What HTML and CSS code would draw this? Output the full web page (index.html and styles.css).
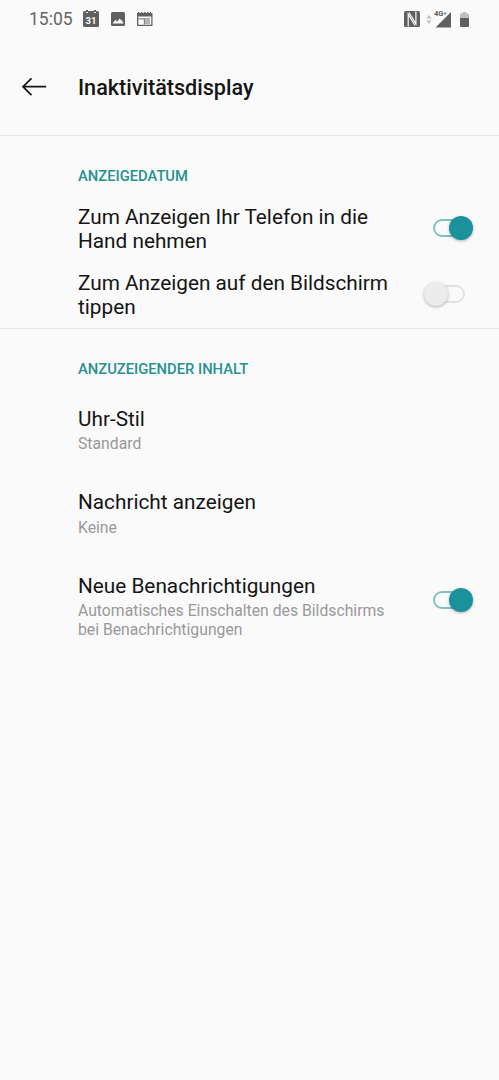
FILE: index.html
```html
<!DOCTYPE html>
<html lang="de">
<head>
<meta charset="utf-8">
<title>Inaktivitätsdisplay</title>
<link rel="stylesheet" href="styles.css">
</head>
<body>
<div class="status">
  <span class="time">15:05</span>
  <svg class="calendar" width="16" height="18" viewBox="0 0 16 18"><path fill="#606060" d="M0 2.500Q0 1 1.500 1H3V0h2v1h6V0h2v1h1.500Q16 1 16 2.500V15.500Q16 17 14.500 17h-13Q0 17 0 15.500z"/><path fill="#fafafa" d="M3 2h2v1H3zM11 2h2v1h-2z"/><text x="8" y="13.500" text-anchor="middle" class="date">31</text></svg>
  <svg class="picture" width="14" height="14" viewBox="0 0 14 14"><rect width="14" height="14" rx="1.500" fill="#606060"/><path fill="#fafafa" d="M1.500 11.500 4.500 7.700 6.300 9.800 8.700 6.500 9.700 8 10.300 7.500 12.700 11.500z"/></svg>
  <svg class="news" width="16" height="14" viewBox="0 0 16 14"><path fill="#606060" fill-rule="evenodd" d="M0 1h1V0h1.500v1H4V0h1.500v1H7V0h1.500v1H10V0h1.500v1H13V0h1v1h1.500v13H0zM1.300 4.500v8.200h13V4.500z"/><path fill="#858585" d="M1.300 6.200H13v1.200H8v5H6.800v-5H1.300z"/><path fill="#b5b5b5" d="M8 7.400h5v4.800H8z"/></svg>
  <span class="spacer"></span>
  <svg class="nfc" width="16" height="16" viewBox="0 0 16 16"><rect width="16" height="16" rx="1.500" fill="#606060"/><path fill="none" stroke="#fafafa" stroke-width="1.200" d="M4.200 15.500V3.200L11 14.500M11.900 .5V12.800L5 1.500"/></svg>
  <svg class="traffic" width="6" height="9" viewBox="0 0 6 9"><path fill="#bdbdbd" d="M3 0 5.500 3.400h-5zM3 9 .5 5.600h5z"/></svg>
  <svg class="signal" width="19" height="18" viewBox="0 0 19 18"><path fill="#606060" d="M18 2v15.500H2.500z"/><path fill="#fafafa" d="M0 0h13.500v6H0z"/><text x="1" y="6" class="network">4G<tspan dy="-1.500" font-size="5.500">+</tspan></text></svg>
  <svg class="battery" width="9" height="15" viewBox="0 0 9 15"><path fill="#bdbdbd" d="M0 2.500Q0 1.500 1 1.500h1.700V0h3.600v1.500H8q1 0 1 1V7H0z"/><path fill="#606060" d="M0 6h9v8q0 1-1 1H1q-1 0-1-1z"/></svg>
</div>
<header class="appbar">
  <svg class="back" width="26" height="20" viewBox="0 0 26 20"><path fill="none" stroke="#151515" stroke-width="1.700" d="M25.200 9.700H2M10.500 1.300 2 9.700l8.500 8.400"/></svg>
  <h1>Inaktivitätsdisplay</h1>
</header>
<main>
  <section class="group triggers">
    <h2>ANZEIGEDATUM</h2>
    <div class="row">
      <div class="label">Zum Anzeigen Ihr Telefon in die<br>Hand nehmen</div>
      <span class="switch on"><i></i><b></b></span>
    </div>
    <div class="row">
      <div class="label">Zum Anzeigen auf den Bildschirm<br>tippen</div>
      <span class="switch off"><i></i><b></b></span>
    </div>
  </section>
  <section class="group content">
    <h2>ANZUZEIGENDER INHALT</h2>
    <div class="row"><div><div class="label">Uhr-Stil</div><div class="summary">Standard</div></div></div>
    <div class="row"><div><div class="label">Nachricht anzeigen</div><div class="summary">Keine</div></div></div>
    <div class="row">
      <div><div class="label">Neue Benachrichtigungen</div><div class="summary">Automatisches Einschalten des Bildschirms<br>bei Benachrichtigungen</div></div>
      <span class="switch on"><i></i><b></b></span>
    </div>
  </section>
</main>
</body>
</html>
```
FILE: styles.css
```css
* { box-sizing: border-box; }
body { margin: 0; min-height: 1080px; background: #fafafa; color: #151515; font-family: Roboto, sans-serif; }
svg { display: block; flex: none; }
.status { display: flex; align-items: center; height: 38px; padding: 0 30px 0 29px; }
.time { width: 54px; font-size: 17.5px; color: #656565; line-height: 38px; }
.picture { margin-left: 12px; }
.news { margin-left: 12px; }
.spacer { flex: 1; }
.date { font: 700 9.5px Roboto, sans-serif; fill: #fafafa; }
.network { font: 700 7.5px Roboto, sans-serif; fill: #606060; }
.traffic { margin-left: 6px; }
.signal { margin-left: 1px; }
.battery { margin-left: 8px; }
.appbar { display: flex; align-items: center; height: 98px; padding: 0 21px; border-bottom: 1px solid #e6e6e6; }
.appbar .back { margin-right: 31px; }
h1 { margin: 2px 0 0; font-size: 21.6px; font-weight: 500; line-height: 24px; }
h2 { margin: 0; font-size: 14.75px; font-weight: 500; line-height: 18px; color: #26918f; }
.group { padding: 31px 25px 0 78px; }
.content { padding-top: 30.5px; }
.triggers { height: 193px; border-bottom: 1px solid #e6e6e6; }
.row { display: flex; align-items: center; justify-content: space-between; white-space: nowrap; }
.label { font-size: 20.77px; line-height: 24.4px; }
.summary { margin-top: 3.8px; font-size: 15.75px; line-height: 18.4px; color: #999; }
.triggers .row { margin-top: 20px; }
.triggers .row + .row { margin-top: 17.2px; }
.triggers .switch { margin-bottom: 2px; }
.content .row { margin-top: 29.2px; }
.content .row + .row { margin-top: 37px; }
.content .switch { align-self: flex-start; margin-top: 12.8px; }
.switch { position: relative; flex: none; width: 50px; height: 26px; }
.switch i { position: absolute; top: 4px; left: 9px; width: 32px; height: 18px; border: 2px solid #82c1c0; border-radius: 9px; }
.switch b { position: absolute; top: 1px; width: 24px; height: 24px; border-radius: 50%; box-shadow: 0 1px 3px rgba(0, 0, 0, .3); }
.on b { right: 1px; background: #1b919b; }
.off b { left: 0; background: #ececec; }
.off i { border-color: #e2e2e2; }
```
